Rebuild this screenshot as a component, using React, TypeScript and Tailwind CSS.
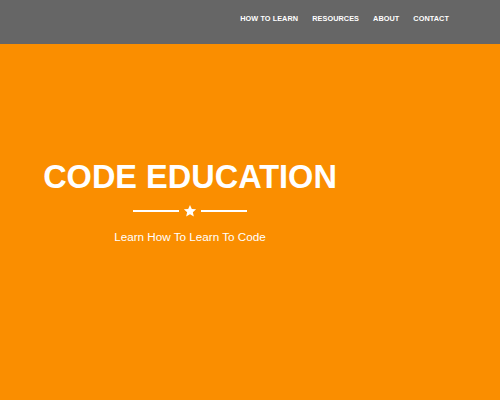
export default function App() {
    return (
        <div className="w-[500px] h-[400px] bg-[#fa8e00] flex flex-col" style={{ fontFamily: '"Liberation Sans", Arial, sans-serif' }}>
            {/* Nav */}
            <header className="h-[44px] bg-[#666666] flex items-center justify-end pr-[51px] pb-[5px]">
                <nav className="flex gap-[14px] text-[7.3px] font-bold text-white uppercase tracking-[0.01em]">
                    <a href="#">How To Learn</a>
                    <a href="#">Resources</a>
                    <a href="#">About</a>
                    <a href="#">Contact</a>
                </nav>
            </header>

            {/* Hero */}
            <section className="w-[380px] pt-[117px] flex flex-col items-center text-white">
                <h1 className="text-[32.5px] leading-[32px] font-bold">CODE EDUCATION</h1>
                <div className="mt-[11px] flex items-center gap-[4px]">
                    <span className="w-[46px] h-[2px] bg-white" />
                    <svg className="w-[14px] h-[14px]" viewBox="0 0 24 24" fill="white">
                        <path d="M12 1.5l3.1 7 7.4.6-5.6 4.9 1.7 7.4L12 17.5l-6.6 3.9 1.7-7.4L1.5 9.1l7.4-.6z" />
                    </svg>
                    <span className="w-[46px] h-[2px] bg-white" />
                </div>
                <p className="mt-[12px] text-[11.7px] leading-[14px]">Learn How To Learn To Code</p>
            </section>
        </div>
    );
}
